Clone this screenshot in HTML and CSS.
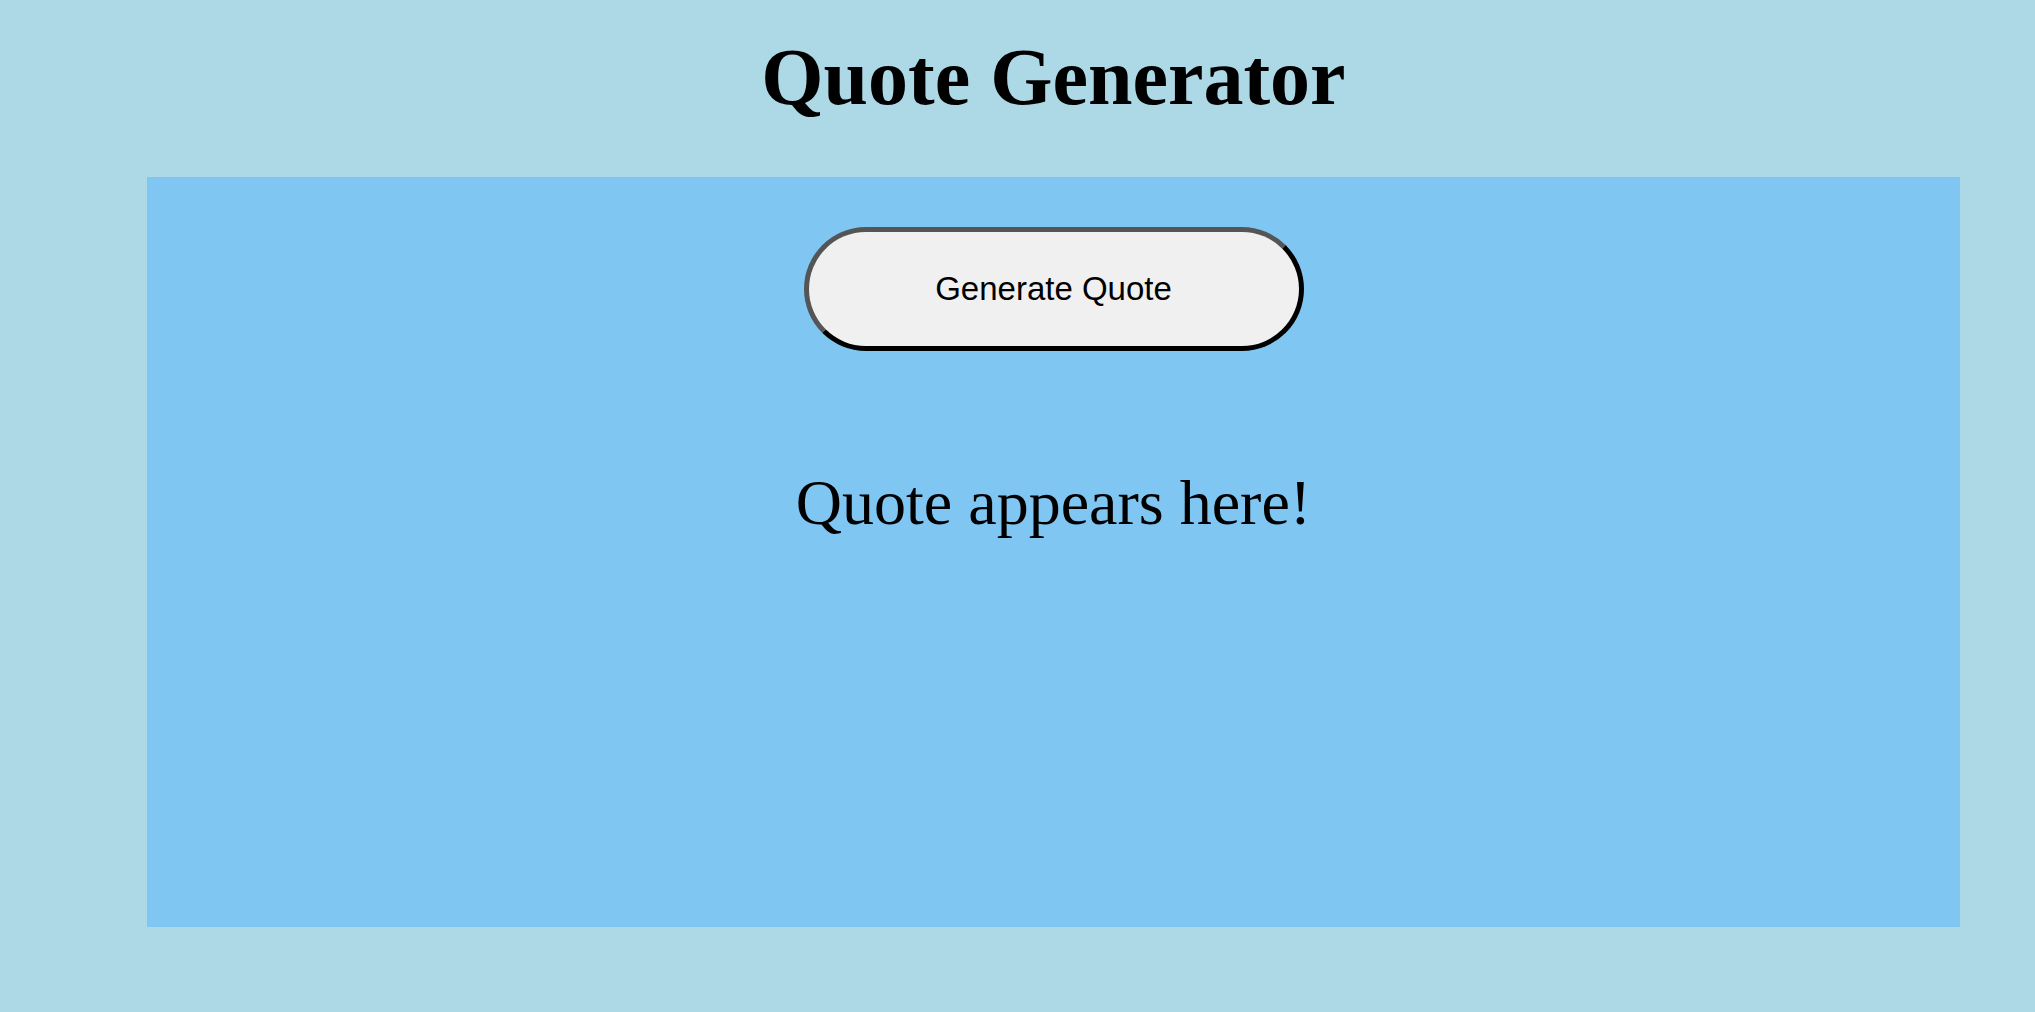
FILE: index.html
```html
<!DOCTYPE html>
<html lang="en">
<head>
<meta charset="utf-8">
<title>Quote Generator</title>
<link rel="stylesheet" href="styles.css">
</head>
<body>
  <header class="header">
    <h1 class="title">Quote Generator</h1>
  </header>
  <main class="panel">
    <button class="generate-btn" type="button">Generate Quote</button>
    <p class="quote">Quote appears here!</p>
  </main>
</body>
</html>
```

FILE: styles.css
```css
html, body {
  margin: 0;
  padding: 0;
}

body {
  background: #add8e6;
  font-family: "Liberation Serif", "Times New Roman", serif;
  color: #000;
  width: 2035px;
  height: 1012px;
  overflow: hidden;
}

.header {
  padding-top: 31px;
  padding-left: 147px;
  width: 1813px;
  height: 146px;
  box-sizing: content-box;
}

.title {
  margin: 0;
  font-size: 80px;
  font-weight: bold;
  line-height: 92px;
  text-align: center;
}

.panel {
  margin-left: 147px;
  width: 1813px;
  height: 750px;
  background: #7fc6f2;
  display: flex;
  flex-direction: column;
  align-items: center;
  padding-top: 50px;
  box-sizing: border-box;
}

.generate-btn {
  width: 500px;
  height: 124px;
  border: 5px solid;
  border-color: #555 #000 #000 #555;
  border-radius: 62px;
  background: #f0f0f0;
  font-family: "Liberation Sans", Arial, sans-serif;
  font-size: 33px;
  color: #000;
  padding: 0;
  cursor: pointer;
}

.quote {
  margin: 115px 0 0 0;
  font-size: 64px;
  line-height: 74px;
  text-align: center;
}
```
